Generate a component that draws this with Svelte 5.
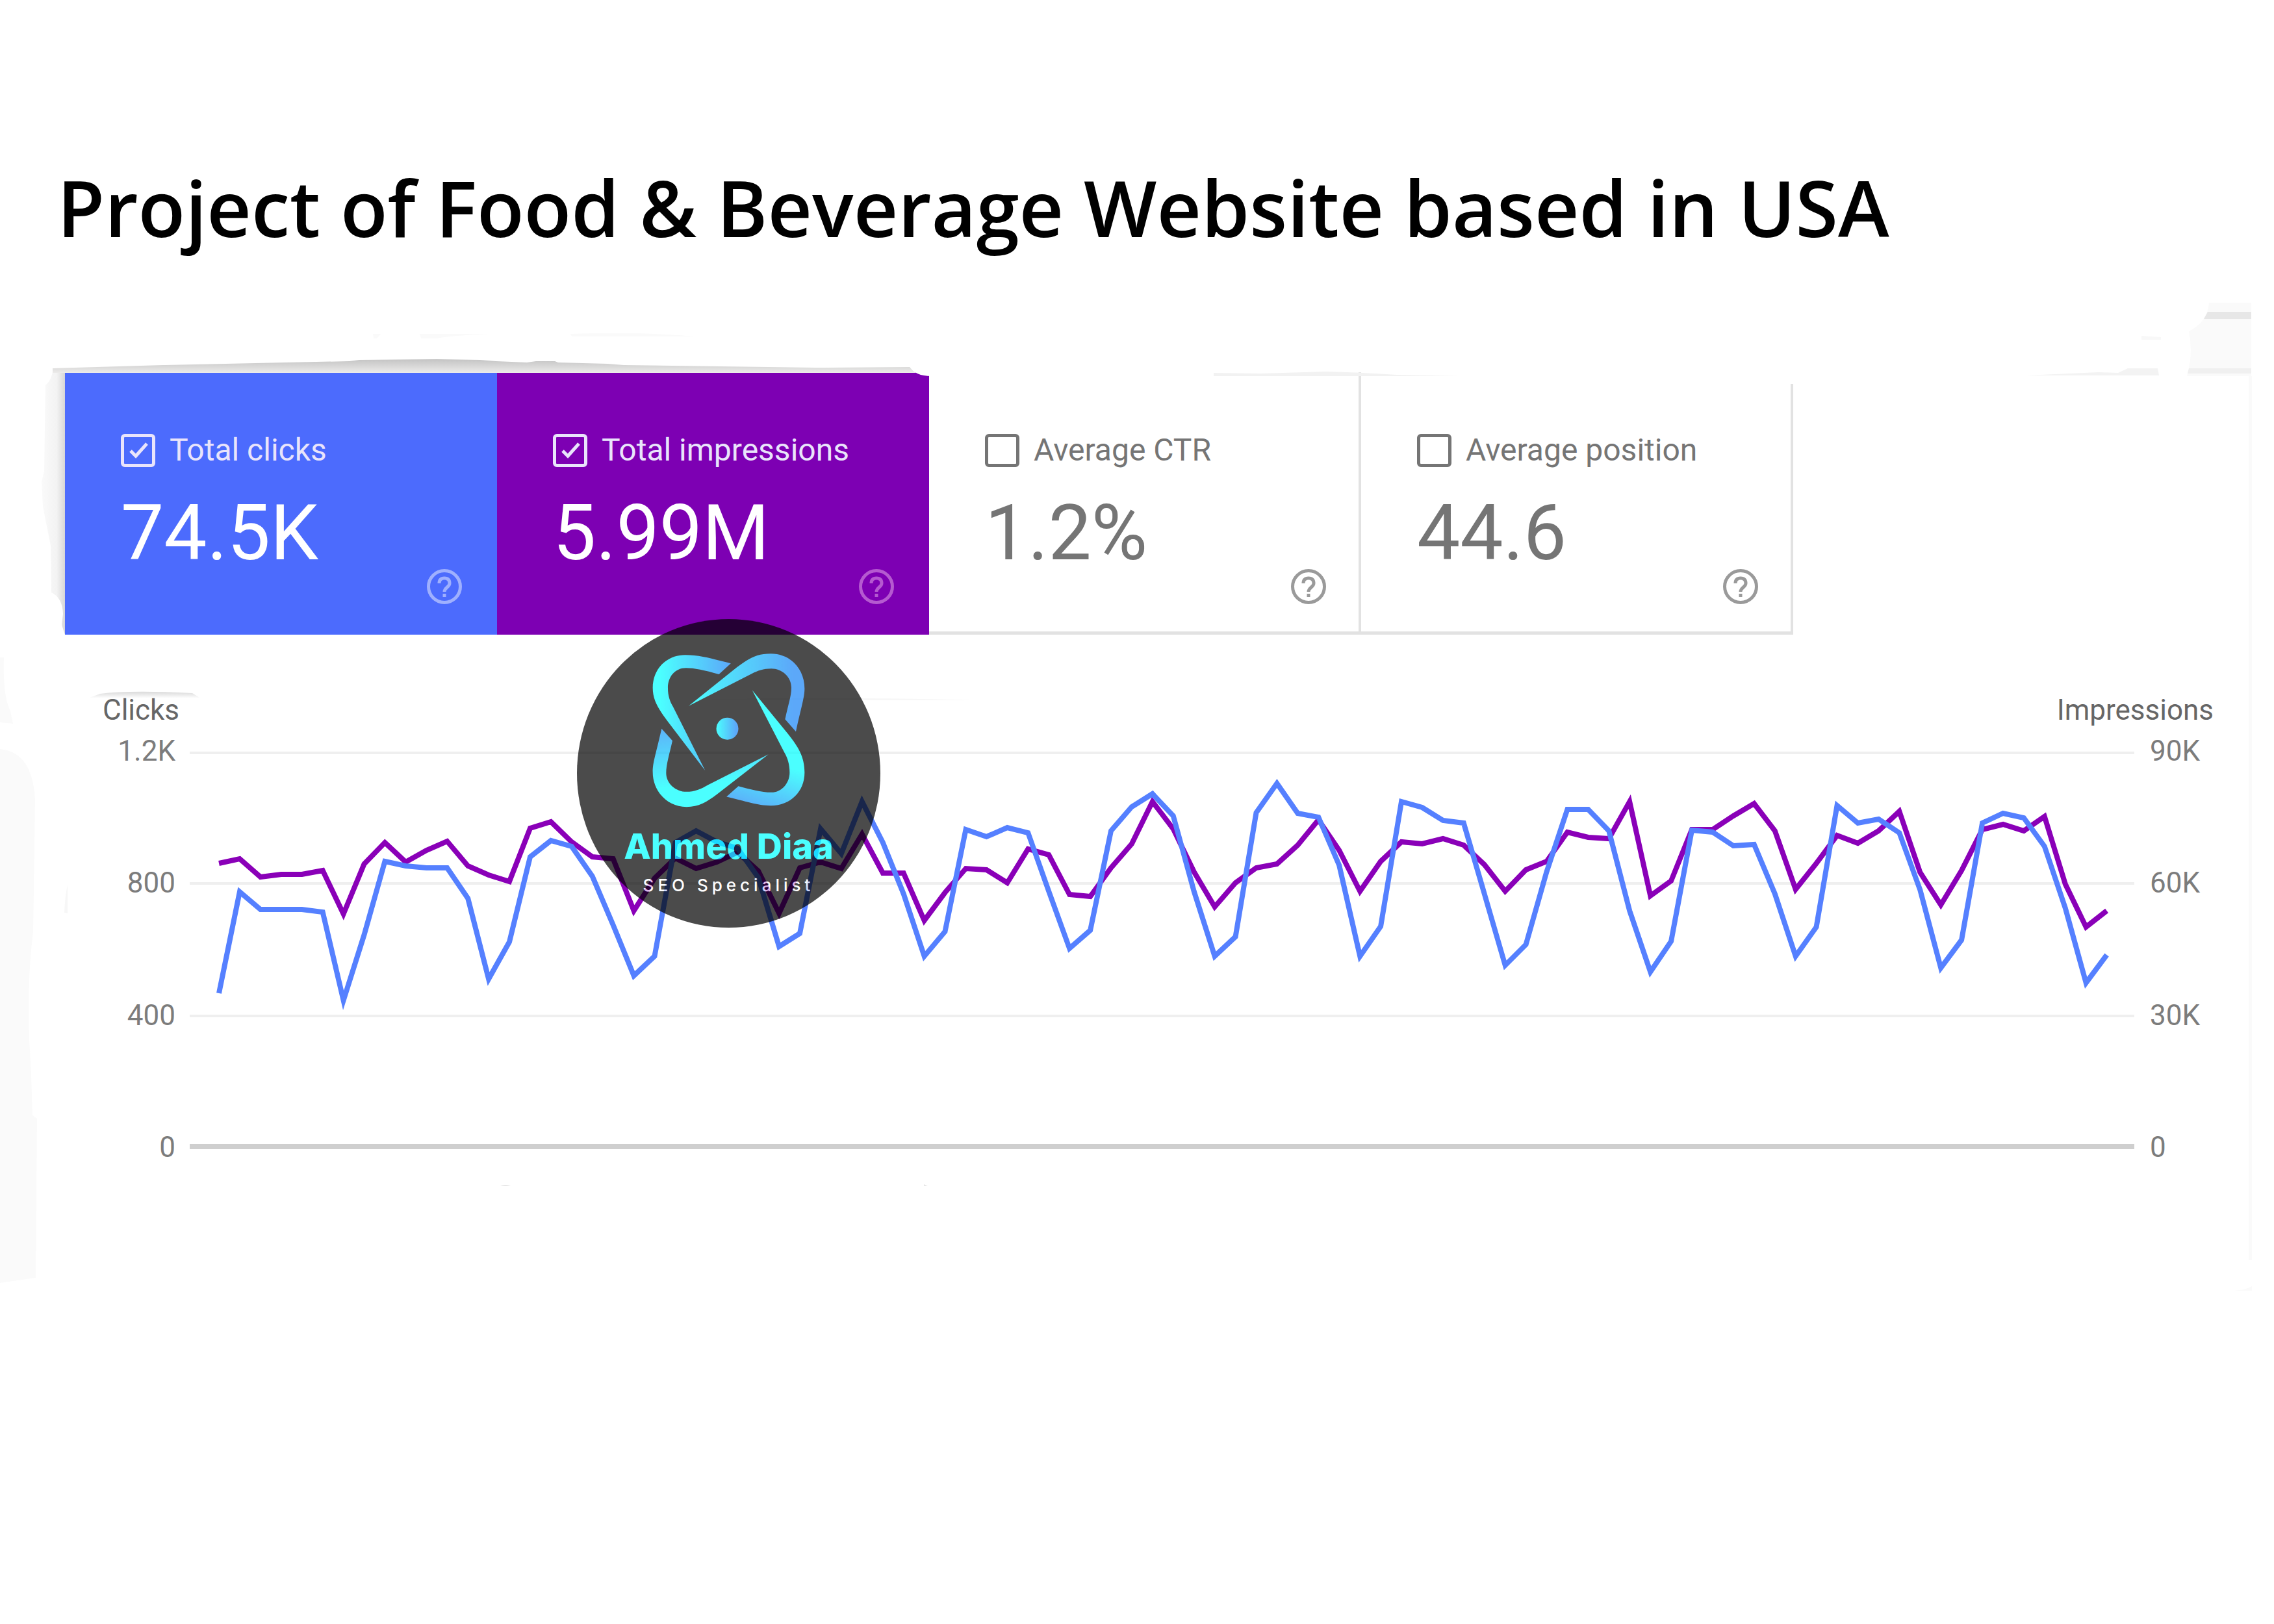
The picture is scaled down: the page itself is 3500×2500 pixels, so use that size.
<script>
  const cards = [
    { id: 'clicks', label: 'Total clicks', value: '74.5K', tone: 'blue', checked: true },
    { id: 'impressions', label: 'Total impressions', value: '5.99M', tone: 'purple', checked: true },
    { id: 'ctr', label: 'Average CTR', value: '1.2%', tone: 'plain', checked: false },
    { id: 'position', label: 'Average position', value: '44.6', tone: 'plain', checked: false }
  ];

  // Daily series in plot units, measured downwards; the zero axis is at 1766.
  const clicks = [
    1530, 1374, 1401, 1401, 1401, 1405, 1541, 1440, 1327, 1334, 1337, 1337, 1384, 1508, 1451, 1320,
    1295, 1304, 1350, 1425, 1503, 1473, 1298, 1280, 1297, 1307, 1352, 1458, 1438, 1277, 1315, 1235,
    1298, 1377, 1473, 1435, 1278, 1289, 1275, 1283, 1373, 1461, 1433, 1280, 1243, 1223, 1257, 1373,
    1473, 1443, 1252, 1207, 1253, 1259, 1333, 1473, 1427, 1235, 1244, 1264, 1268, 1377, 1487, 1455,
    1343, 1247, 1247, 1280, 1403, 1497, 1450, 1279, 1282, 1303, 1301, 1377, 1473, 1428, 1241, 1268,
    1262, 1283, 1371, 1491, 1448, 1268, 1253, 1260, 1304, 1399, 1514, 1471
  ];
  const impressions = [
    1330, 1323, 1351, 1347, 1347, 1341, 1408, 1331, 1298, 1328, 1310, 1296, 1334, 1348, 1358, 1276,
    1266, 1297, 1320, 1323, 1403, 1353, 1322, 1338, 1328, 1313, 1342, 1407, 1337, 1328, 1338, 1285,
    1345, 1345, 1418, 1375, 1338, 1340, 1360, 1308, 1317, 1378, 1381, 1337, 1300, 1235, 1277, 1343,
    1397, 1360, 1337, 1331, 1302, 1263, 1310, 1373, 1327, 1297, 1300, 1292, 1302, 1332, 1373, 1340,
    1327, 1282, 1290, 1292, 1235, 1380, 1357, 1278, 1278, 1257, 1238, 1280, 1370, 1330, 1287, 1299,
    1280, 1250, 1344, 1394, 1341, 1278, 1270, 1280, 1258, 1362, 1428, 1403
  ];
  const toPoints = (series) => series.map((y, i) => `${(45 + i * 31.93).toFixed(1)},${y}`).join(' ');
</script>

<main class="page">
  <h1>Project of Food &amp; Beverage Website based in USA</h1>

  <section class="cards" aria-label="Metrics">
    {#each cards as card}
      <div class="card {card.tone}">
        <div class="metric">
          <label for={card.id}>
            <span class="tick">
              <input type="checkbox" id={card.id} checked={card.checked} />
              <svg viewBox="0 0 53 51" aria-hidden="true"><path d="M15 26L23 34L40 15" /></svg>
            </span>
            {card.label}
          </label>
          <div class="value">{card.value}</div>
        </div>
        <button class="help" aria-label="Help for {card.label}">
          <svg viewBox="0 0 54 54" aria-hidden="true">
            <circle cx="27" cy="27" r="24.5" />
            <path d="M19 22Q19 14 27 14Q35 14 35 22C35 28 27 28 27 35" />
            <path d="M27 38V43" />
          </svg>
        </button>
      </div>
    {/each}
  </section>

  <section class="chart" aria-label="Clicks and impressions per day">
    <div class="heads"><span>Clicks</span><span>Impressions</span></div>
    <div class="body">
      <div class="axis left"><span>1.2K</span><span>800</span><span>400</span><span>0</span></div>
      <svg class="plot" viewBox="0 1131 2993 662" preserveAspectRatio="none" role="img" aria-label="Line chart">
        {#each [1160, 1361, 1565] as y}
          <line class="grid" x1="0" x2="2993" y1={y} y2={y} />
        {/each}
        <line class="zero" x1="0" x2="2993" y1="1766" y2="1766" />
        <polyline class="impressions" points={toPoints(impressions)} />
        <polyline class="clicks" points={toPoints(clicks)} />
      </svg>
      <div class="axis right"><span>90K</span><span>60K</span><span>30K</span><span>0</span></div>
    </div>
  </section>

  <svg class="smudges" viewBox="0 0 3500 2500" aria-hidden="true">
    <defs>
      <linearGradient id="topShade" x1="0" y1="0" x2="0" y2="1">
        <stop offset="0" stop-color="#c4c4c4" /><stop offset="1" stop-color="#ecebea" />
      </linearGradient>
      <linearGradient id="sideShade" x1="0" y1="0" x2="1" y2="0">
        <stop offset="0" stop-color="#fafafa" /><stop offset="0.65" stop-color="#f3f3f3" /><stop offset="1" stop-color="#d6d6d6" />
      </linearGradient>
      <linearGradient id="labelShade" x1="0" y1="0" x2="0" y2="1">
        <stop offset="0" stop-color="#dadada" /><stop offset="1" stop-color="#ffffff" />
      </linearGradient>
    </defs>
    <path fill="#fafafa" d="M0 1153Q50 1158 54 1231L51 1436Q42 1500 45 1600L48 1655L50 1717L57 1722L55 1967L0 1975Z" />
    <path fill="#fafafa" d="M0 1012H6Q4 1070 16 1095L20 1114L0 1112Z" />
    <path fill="url(#sideShade)" d="M82 567Q80 585 70 593L68 725L64 742L66 780L78 840L79 912Q96 920 97 945L95 962L100 977V567Z" />
    <path fill="url(#topShade)" d="M81 567L251 562L538 556L553 554L672 553L739 554L763 556L811 558L825 556L854 556L859 558L935 560L960 562L1256 566L1400 565L1410 574H81Z" />
    <path fill="#fafafa" d="M574 514H586L580 521H575ZM646 514H753Q690 517 672 521H648ZM878 514Q1000 511 1070 518H880Z" />
    <path fill="#f2f2f2" d="M1868 574L1940 575L2040 572Q2090 573 2150 577L2246 579H1868Z" />
    <path fill="url(#labelShade)" d="M138 1074L154 1068Q200 1062 296 1067L309 1075Z" />
    <path fill="#f7f7f7" d="M99 1405Q100 1380 104 1362V1406ZM1080 1077Q1300 1072 1500 1078H1356Z" />
    <path fill="#fafafa" d="M3465 466H3400Q3398 496 3369 510Q3376 545 3366 579H3465Z" />
    <path fill="#e7e7e7" d="M3398 480H3465V491H3392Z" />
    <path fill="#f0f0f0" d="M3369 567H3465V575H3367Z" />
    <path fill="#f8f8f8" d="M3296 517L3326 519V523H3296Z" />
    <path fill="#f3f3f3" d="M3118 578L3230 573L3260 574L3275 567H3321L3323 578Z" />
    <path fill="#fafafa" d="M3461 579H3466V1940H3461ZM3438 1987Q3455 1986 3466 1980V1987Z" />
    <path fill="#e6e6e6" d="M770 1826Q778 1822 786 1826ZM1422 1823L1428 1826H1422Z" />
    <path fill="#ffffff" d="M1400 564Q1408 579 1434 579V564ZM2740 560H2770V591H2740Z" />
  </svg>

  <div class="badge">
    <svg viewBox="430 225 706 714" aria-hidden="true">
      <defs>
        <linearGradient id="gA" x1="0" y1="0" x2="1" y2="0">
          <stop offset="0.1" stop-color="#00ffff" /><stop offset="1" stop-color="#1884f7" />
        </linearGradient>
        <linearGradient id="gB" x1="0" y1="0" x2="1" y2="0">
          <stop offset="0" stop-color="#00ffff" /><stop offset="0.9" stop-color="#1884f7" />
        </linearGradient>
        <linearGradient id="gC" x1="0.3" y1="0" x2="0.1" y2="1">
          <stop offset="0.2" stop-color="#00ffff" /><stop offset="0.55" stop-color="#00ffff" /><stop offset="1" stop-color="#1884f7" />
        </linearGradient>
        <linearGradient id="gD" x1="0" y1="0" x2="0.15" y2="1">
          <stop offset="0" stop-color="#1890f7" /><stop offset="0.75" stop-color="#00ffff" />
        </linearGradient>
      </defs>
      <path fill="url(#gA)" d="M793 273L738 324Q640 294 586 294C535 294 502 335 502 386C502 425 512 450 526 474L674 768L500 540C460 485 432 445 432 386C432 300 495 234 582 234C650 234 700 250 793 273Z" />
      <path fill="url(#gB)" d="M598 470L820 292C880 247 915 228 978 228C1070 228 1134 300 1134 390C1134 430 1120 470 1094 589L1044 532C1058 465 1073 425 1073 386C1073 335 1030 297 980 297C945 297 915 307 892 320Z" />
      <path fill="url(#gC)" d="M892 397L1058 600C1105 660 1134 705 1134 778C1134 865 1070 931 978 931C915 931 860 910 773 890L828 841C880 855 935 870 980 870C1030 870 1065 825 1065 778C1065 740 1055 710 1042 688Z" />
      <path fill="url(#gD)" d="M967 694L730 878C680 915 645 937 588 937C500 937 432 865 432 776C432 730 445 700 473 575L523 631C510 690 494 740 494 780C494 830 540 867 588 867C625 867 655 855 688 835Z" />
      <circle cx="777" cy="575" r="51" fill="url(#gB)" />
    </svg>
    <div class="name">Ahmed Diaa</div>
    <div class="role">SEO Specialist</div>
  </div>
</main>

<style>
  :global(body) { background: #fff; }
  .page {
    position: relative;
    box-sizing: border-box;
    min-height: 100vh;
    padding-top: 239px;
    font-family: Roboto, "Liberation Sans", sans-serif;
    color: #757575;
    overflow: hidden;
  }
  .smudges { position: absolute; inset: 0 0 auto 0; width: 100%; pointer-events: none; }
  h1 {
    margin: 0 88px 174px;
    font: 600 119px/160px "Open Sans", "Noto Sans", sans-serif;
    color: #000;
  }
  .cards {
    display: grid;
    grid-template-columns: repeat(4, 1fr);
    width: 76%;
    margin-left: 100px;
  }
  .card {
    display: grid;
    grid-template-columns: 1fr 54px;
    box-sizing: border-box;
    min-height: 404px;
    padding: 92px 54px 47px 86px;
  }
  .blue { background: #4c6bfd; color: #fff; }
  .purple { background: #7d00b3; color: #fff; }
  .plain {
    padding-right: 50px;
    padding-bottom: 42px;
    border-right: 4px solid #e2e2e2;
    border-bottom: 5px solid #e2e2e2;
  }
  label {
    display: flex;
    align-items: center;
    gap: 22px;
    font-size: 48px;
    line-height: 56px;
    white-space: nowrap;
  }
  .blue label, .purple label { color: #e9e4fb; }
  .tick { display: grid; width: 53px; height: 51px; }
  .tick > * { grid-area: 1 / 1; }
  input {
    appearance: none;
    box-sizing: border-box;
    width: 53px;
    height: 51px;
    margin: 0;
    border: 5px solid currentColor;
    border-radius: 6px;
    color: inherit;
  }
  .tick svg { width: 53px; height: 51px; visibility: hidden; pointer-events: none; }
  input:checked + svg { visibility: visible; }
  .tick path { fill: none; stroke: currentColor; stroke-width: 5; }
  .value { margin-top: 32px; font-size: 118px; line-height: 136px; }
  .help {
    align-self: end;
    width: 54px;
    height: 54px;
    padding: 0;
    border: 0;
    background: none;
    color: #9a9a9a;
  }
  .blue .help { color: #9fb0fe; }
  .purple .help { color: #b55ad0; }
  .help svg { display: block; fill: none; stroke: currentColor; stroke-width: 5; }

  .chart { margin: 90px 93px 0 158px; font-size: 44px; line-height: 52px; }
  .heads { display: flex; justify-content: space-between; color: #666; }
  .body { display: flex; height: 662px; margin-top: 11px; }
  .axis { display: flex; flex-direction: column; justify-content: space-between; color: #7c7c7c; }
  .left { width: 112px; margin-right: 22px; text-align: right; }
  .right { width: 98px; margin-left: 24px; }
  .plot { flex: 1; min-width: 0; height: 100%; }
  .plot > * { fill: none; vector-effect: non-scaling-stroke; }
  .grid { stroke: #efefef; stroke-width: 4; }
  .zero { stroke: #cfcfcf; stroke-width: 8; }
  .impressions { stroke: #8a00b8; stroke-width: 8; }
  .clicks { stroke: #5580ff; stroke-width: 8; }

  .badge {
    position: absolute;
    left: 888px;
    top: 953px;
    display: flex;
    flex-direction: column;
    align-items: center;
    box-sizing: border-box;
    width: 467px;
    height: 475px;
    padding-top: 52px;
    border-radius: 50%;
    background: #000;
    opacity: 0.7;
    font-family: Inter, "Liberation Sans", sans-serif;
    white-space: nowrap;
  }
  .badge svg { width: 235px; height: 238px; }
  .name { margin-top: 28px; font-size: 54px; font-weight: 800; line-height: 64px; color: #0ff; }
  .role { margin-top: 12px; font-size: 26px; font-weight: 500; line-height: 32px; letter-spacing: 6px; color: #fff; }
</style>
